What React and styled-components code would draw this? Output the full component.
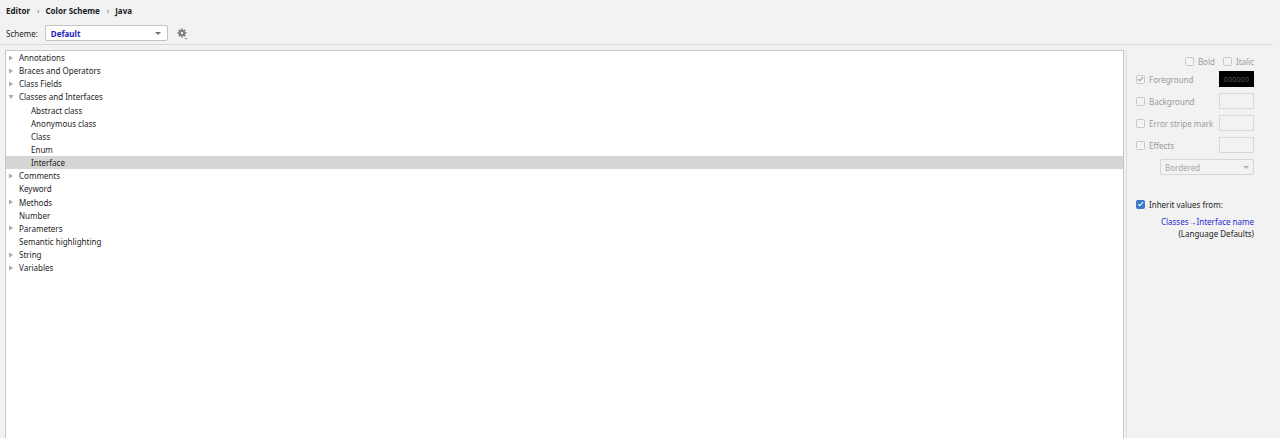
import React from "react";
import styled, { createGlobalStyle } from "styled-components";

const GlobalStyle = createGlobalStyle`
  html, body {
    margin: 0;
    padding: 0;
    background: #f2f2f2;
    height: 438px;
    overflow: hidden;
  }
  body {
    font-family: "Noto Sans", "Open Sans", sans-serif;
    font-size: 8px;
    color: #1e1e1e;
  }
`;

const treeItems = [
  { name: "Annotations", level: 0, arrow: "right" },
  { name: "Braces and Operators", level: 0, arrow: "right" },
  { name: "Class Fields", level: 0, arrow: "right" },
  { name: "Classes and Interfaces", level: 0, arrow: "down" },
  { name: "Abstract class", level: 1 },
  { name: "Anonymous class", level: 1 },
  { name: "Class", level: 1 },
  { name: "Enum", level: 1 },
  { name: "Interface", level: 1, selected: true },
  { name: "Comments", level: 0, arrow: "right" },
  { name: "Keyword", level: 0 },
  { name: "Methods", level: 0, arrow: "right" },
  { name: "Number", level: 0 },
  { name: "Parameters", level: 0, arrow: "right" },
  { name: "Semantic highlighting", level: 0 },
  { name: "String", level: 0, arrow: "right" },
  { name: "Variables", level: 0, arrow: "right" },
];

const GearIcon = () => (
  <svg width="11" height="12" viewBox="0 0 11 12">
    <g fill="#7b7b7b">
      <circle cx="5" cy="5" r="3" />
      <rect x="4.2" y="0.5" width="1.6" height="9" />
      <rect x="0.5" y="4.2" width="9" height="1.6" />
      <rect x="4.2" y="0.5" width="1.6" height="9" transform="rotate(45 5 5)" />
      <rect x="4.2" y="0.5" width="1.6" height="9" transform="rotate(-45 5 5)" />
      <path d="M7.5 10 L10.5 10 L9 11.6 Z" />
    </g>
    <circle cx="5" cy="5" r="1.2" fill="#f2f2f2" />
  </svg>
);

const TreeArrow = ({ dir }) => (
  <svg width="6" height="6" viewBox="0 0 6 6">
    {dir === "down" ? (
      <path d="M0.5 1 L5.5 1 L3 5 Z" fill="#a8a8a8" />
    ) : (
      <path d="M1 0.5 L5 3 L1 5.5 Z" fill="#a8a8a8" />
    )}
  </svg>
);

const Checkbox = ({ checked, disabled }) => (
  <StyledCheckbox $checked={checked} $disabled={disabled}>
    {checked && (
      <svg width="8" height="8" viewBox="0 0 8 8">
        <path
          d="M1.3 4.2 L3.2 6 L6.8 1.8"
          fill="none"
          stroke={disabled ? "#9a9a9a" : "#ffffff"}
          strokeWidth="1.2"
        />
      </svg>
    )}
  </StyledCheckbox>
);

export default function App() {
  return (
    <StyledPage>
      <GlobalStyle />
      <StyledBreadcrumbs>
        <span>Editor</span>
        <StyledCrumbSep>›</StyledCrumbSep>
        <span>Color Scheme</span>
        <StyledCrumbSep>›</StyledCrumbSep>
        <span>Java</span>
      </StyledBreadcrumbs>
      <StyledSchemeRow>
        <StyledLabel>Scheme:</StyledLabel>
        <StyledCombo>
          <StyledComboValue>Default</StyledComboValue>
          <StyledComboArrow />
        </StyledCombo>
        <StyledGear>
          <GearIcon />
        </StyledGear>
      </StyledSchemeRow>
      <StyledSeparator />
      <StyledMain>
        <StyledTree>
          {treeItems.map((item) => (
            <StyledTreeRow key={item.name} $selected={item.selected}>
              <StyledArrowSlot>
                {item.arrow && <TreeArrow dir={item.arrow} />}
              </StyledArrowSlot>
              <StyledTreeText $level={item.level}>{item.name}</StyledTreeText>
            </StyledTreeRow>
          ))}
        </StyledTree>
        <StyledSplitter />
        <StyledSide>
          <StyledStyleRow>
            <StyledOption>
              <Checkbox disabled />
              <StyledDimText>Bold</StyledDimText>
            </StyledOption>
            <StyledOption>
              <Checkbox disabled />
              <StyledDimText>Italic</StyledDimText>
            </StyledOption>
          </StyledStyleRow>
          <StyledAttrRow>
            <StyledOption>
              <Checkbox checked disabled />
              <StyledDimText>Foreground</StyledDimText>
            </StyledOption>
            <StyledSwatch $filled>000000</StyledSwatch>
          </StyledAttrRow>
          <StyledAttrRow>
            <StyledOption>
              <Checkbox disabled />
              <StyledDimText>Background</StyledDimText>
            </StyledOption>
            <StyledSwatch />
          </StyledAttrRow>
          <StyledAttrRow>
            <StyledOption>
              <Checkbox disabled />
              <StyledDimText>Error stripe mark</StyledDimText>
            </StyledOption>
            <StyledSwatch />
          </StyledAttrRow>
          <StyledAttrRow>
            <StyledOption>
              <Checkbox disabled />
              <StyledDimText>Effects</StyledDimText>
            </StyledOption>
            <StyledSwatch />
          </StyledAttrRow>
          <StyledEffectSelect>
            <span>Bordered</span>
            <StyledSelectArrow />
          </StyledEffectSelect>
          <StyledInheritRow>
            <Checkbox checked />
            <span>Inherit values from:</span>
          </StyledInheritRow>
          <StyledInheritLink>Classes→Interface name</StyledInheritLink>
          <StyledInheritNote>(Language Defaults)</StyledInheritNote>
        </StyledSide>
      </StyledMain>
    </StyledPage>
  );
}

const StyledPage = styled.div`
  display: flex;
  flex-direction: column;
  height: 438px;
`;

const StyledBreadcrumbs = styled.div`
  display: flex;
  align-items: center;
  height: 20px;
  padding: 0 6px;
  font-weight: 700;
  font-size: 8px;
  color: #1a1a1a;
`;

const StyledCrumbSep = styled.span`
  font-weight: 400;
  color: #777;
  margin: 0 6px 0 7px;
`;

const StyledSchemeRow = styled.div`
  display: flex;
  align-items: center;
  height: 18px;
  margin-top: 4px;
  padding: 0 6px;
`;

const StyledLabel = styled.span`
  color: #1e1e1e;
  margin-right: 7px;
`;

const StyledCombo = styled.div`
  display: flex;
  align-items: center;
  justify-content: space-between;
  box-sizing: border-box;
  width: 123px;
  height: 16px;
  background: #ffffff;
  border: 1px solid #c4c4c4;
  border-radius: 2px;
  padding: 0 6px 0 5px;
`;

const StyledComboValue = styled.span`
  color: #2424b8;
  font-weight: 700;
`;

const StyledComboArrow = styled.span`
  width: 0;
  height: 0;
  border-left: 3px solid transparent;
  border-right: 3px solid transparent;
  border-top: 3px solid #6e6e6e;
`;

const StyledSelectArrow = styled(StyledComboArrow)`
  border-top-color: #b0b0b0;
`;

const StyledGear = styled.span`
  display: flex;
  margin-left: 9px;
  margin-top: 2px;
`;

const StyledSeparator = styled.div`
  height: 1px;
  background: #d7d7d7;
  margin: 2px 7px 0 0;
`;

const StyledMain = styled.div`
  flex: 1;
  display: flex;
  margin-top: 5px;
  padding-left: 5px;
  min-height: 0;
`;

const StyledTree = styled.div`
  flex: 1;
  background: #ffffff;
  border: 1px solid #c6c6c6;
  border-bottom: none;
`;

const StyledTreeRow = styled.div`
  display: flex;
  align-items: center;
  height: 13.15px;
  background: ${({ $selected }) => ($selected ? "#d5d5d5" : "transparent")};
`;

const StyledArrowSlot = styled.span`
  display: flex;
  width: 6px;
  margin-left: 2px;
`;

const StyledTreeText = styled.span`
  margin-left: ${({ $level }) => 5 + $level * 12}px;
  color: #1e1e1e;
  white-space: nowrap;
`;

const StyledSplitter = styled.div`
  width: 1px;
  margin-left: 2px;
  background: #dedede;
`;

const StyledSide = styled.div`
  box-sizing: border-box;
  width: 153px;
  display: flex;
  flex-direction: column;
  padding: 6px 26px 0 9px;
`;

const StyledStyleRow = styled.div`
  display: flex;
  justify-content: flex-end;
  gap: 8px;
  height: 10px;
`;

const StyledOption = styled.div`
  display: flex;
  align-items: center;
  gap: 4px;
`;

const StyledCheckbox = styled.span`
  display: inline-flex;
  align-items: center;
  justify-content: center;
  box-sizing: border-box;
  width: 9px;
  height: 9px;
  border-radius: 1.5px;
  border: 1px solid
    ${({ $checked, $disabled }) =>
      $checked && !$disabled ? "#3d78c8" : "#c8c8c8"};
  background: ${({ $checked, $disabled }) =>
    $checked && !$disabled ? "#3d78c8" : "#f4f4f4"};
`;

const StyledDimText = styled.span`
  color: #9b9b9b;
`;

const StyledAttrRow = styled.div`
  display: flex;
  align-items: center;
  justify-content: space-between;
  height: 16px;
  margin-top: 6px;

  &:nth-child(2) {
    margin-top: 5px;
  }
`;

const StyledSwatch = styled.span`
  display: flex;
  align-items: center;
  justify-content: center;
  box-sizing: border-box;
  width: 35px;
  height: 16px;
  font-size: 7px;
  letter-spacing: 0.3px;
  color: #5a5a5a;
  background: ${({ $filled }) => ($filled ? "#000000" : "#f2f2f2")};
  border: 1px solid ${({ $filled }) => ($filled ? "#000000" : "#d8d8d8")};
`;

const StyledEffectSelect = styled.div`
  display: flex;
  align-items: center;
  justify-content: space-between;
  align-self: flex-end;
  box-sizing: border-box;
  width: 94px;
  height: 16px;
  margin-top: 6px;
  padding: 0 4px;
  border: 1px solid #d6d6d6;
  border-radius: 2px;
  color: #a6a6a6;
`;

const StyledInheritRow = styled.div`
  display: flex;
  align-items: center;
  gap: 4px;
  margin-top: 23px;
  height: 12px;
  color: #1e1e1e;
`;

const StyledInheritLink = styled.div`
  text-align: right;
  margin-top: 6px;
  line-height: 12px;
  color: #2b2bd0;
  white-space: nowrap;
`;

const StyledInheritNote = styled.div`
  text-align: right;
  line-height: 12px;
  color: #1e1e1e;
  white-space: nowrap;
`;
